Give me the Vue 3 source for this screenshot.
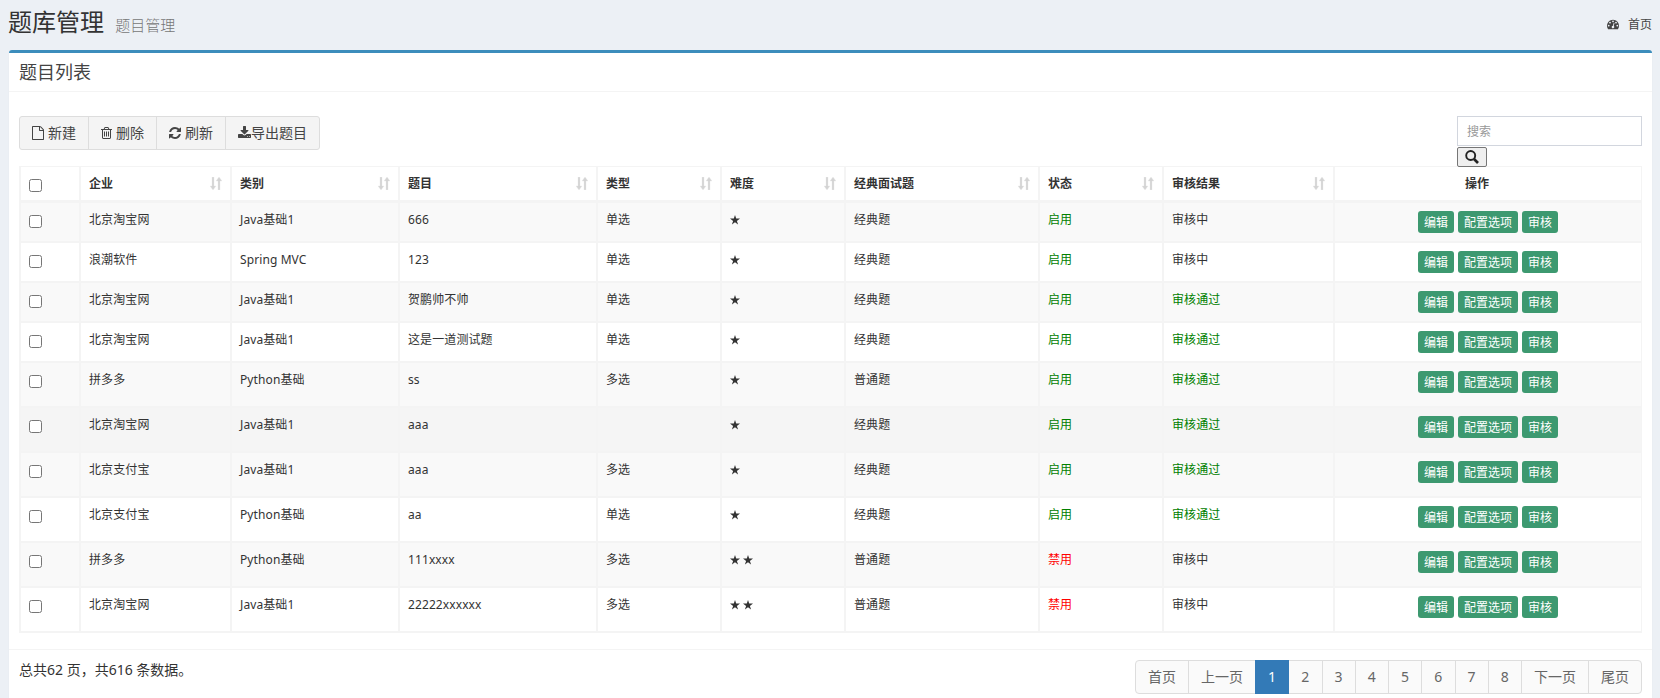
<script setup>
import { ref } from 'vue'

const keyword = ref('')
const current = ref(1)

const columns = ['企业', '类别', '题目', '类型', '难度', '经典面试题', '状态', '审核结果']
const pages = ['首页', '上一页', 1, 2, 3, 4, 5, 6, 7, 8, '下一页', '尾页']
const actions = ['编辑', '配置选项', '审核']

const rows = ref([
  { company: '北京淘宝网', category: 'Java基础1', title: '666', type: '单选', stars: 1, classic: '经典题', status: '启用', review: '审核中' },
  { company: '浪潮软件', category: 'Spring MVC', title: '123', type: '单选', stars: 1, classic: '经典题', status: '启用', review: '审核中' },
  { company: '北京淘宝网', category: 'Java基础1', title: '贺鹏帅不帅', type: '单选', stars: 1, classic: '经典题', status: '启用', review: '审核通过' },
  { company: '北京淘宝网', category: 'Java基础1', title: '这是一道测试题', type: '单选', stars: 1, classic: '经典题', status: '启用', review: '审核通过' },
  { company: '拼多多', category: 'Python基础', title: 'ss', type: '多选', stars: 1, classic: '普通题', status: '启用', review: '审核通过', tall: true },
  { company: '北京淘宝网', category: 'Java基础1', title: 'aaa', type: '', stars: 1, classic: '经典题', status: '启用', review: '审核通过', tall: true, active: true },
  { company: '北京支付宝', category: 'Java基础1', title: 'aaa', type: '多选', stars: 1, classic: '经典题', status: '启用', review: '审核通过', tall: true },
  { company: '北京支付宝', category: 'Python基础', title: 'aa', type: '单选', stars: 1, classic: '经典题', status: '启用', review: '审核通过', tall: true },
  { company: '拼多多', category: 'Python基础', title: '111xxxx', type: '多选', stars: 2, classic: '普通题', status: '禁用', review: '审核中', tall: true },
  { company: '北京淘宝网', category: 'Java基础1', title: '22222xxxxxx', type: '多选', stars: 2, classic: '普通题', status: '禁用', review: '审核中', tall: true }
])

const goto = (p) => {
  if (typeof p === 'number') current.value = p
}
</script>

<template>
  <div class="content-wrapper" lang="zh-CN">
    <section class="content-header">
      <h1>题库管理 <small>题目管理</small></h1>
      <a class="breadcrumb">
        <svg class="dashboard" viewBox="0 0 1792 1792"><path d="M384 1152q0-53-37.5-90.5t-90.5-37.5-90.5 37.5-37.5 90.5 37.5 90.5 90.5 37.5 90.5-37.5 37.5-90.5zm192-448q0-53-37.5-90.5t-90.5-37.5-90.5 37.5-37.5 90.5 37.5 90.5 90.5 37.5 90.5-37.5 37.5-90.5zm428 481l101-382q6-26-7.5-48.5t-38.5-29.5-48 6.5-30 39.5l-101 382q-60 5-107 43.5t-63 98.5q-20 77 20 146t117 89 146-20 89-117q16-60-6-117t-72-91zm660-33q0-53-37.5-90.5t-90.5-37.5-90.5 37.5-37.5 90.5 37.5 90.5 90.5 37.5 90.5-37.5 37.5-90.5zm-640-640q0-53-37.5-90.5t-90.5-37.5-90.5 37.5-37.5 90.5 37.5 90.5 90.5 37.5 90.5-37.5 37.5-90.5zm448 192q0-53-37.5-90.5t-90.5-37.5-90.5 37.5-37.5 90.5 37.5 90.5 90.5 37.5 90.5-37.5 37.5-90.5zm320 448q0 261-141 483-19 29-54 29h-1402q-35 0-54-29-141-221-141-483 0-182 71-348t191-286 286-191 348-71 348 71 286 191 191 286 71 348z" /></svg>
        首页
      </a>
    </section>

    <section class="box">
      <div class="box-header">
        <h3>题目列表</h3>
      </div>

      <div class="box-body">
        <div class="tools">
          <div class="btn-group">
            <button class="btn new">
              <svg class="file" viewBox="0 0 1536 1792"><path d="M1468 380q28 28 48 76t20 88v1152q0 40-28 68t-68 28h-1344q-40 0-68-28t-28-68v-1600q0-40 28-68t68-28h896q40 0 88 20t76 48zm-444-244v376h376q-10-29-22-41l-313-313q-12-12-41-22zm384 1528v-1024h-416q-40 0-68-28t-28-68v-416h-768v1536h1280z" /></svg>新建
            </button>
            <button class="btn del">
              <svg class="trash" viewBox="192 0 1408 1792"><path d="M704 736v576q0 14-9 23t-23 9h-64q-14 0-23-9t-9-23v-576q0-14 9-23t23-9h64q14 0 23 9t9 23zm256 0v576q0 14-9 23t-23 9h-64q-14 0-23-9t-9-23v-576q0-14 9-23t23-9h64q14 0 23 9t9 23zm256 0v576q0 14-9 23t-23 9h-64q-14 0-23-9t-9-23v-576q0-14 9-23t23-9h64q14 0 23 9t9 23zm128 724v-948h-896v948q0 22 7 40.5t14.5 27 10.5 8.5h832q3 0 10.5-8.5t14.5-27 7-40.5zm-672-1076h448l-48-117q-7-9-17-11h-317q-10 2-17 11zm928 32v64q0 14-9 23t-23 9h-96v948q0 83-47 143.5t-113 60.5h-832q-66 0-113-58.5t-47-141.5v-952h-96q-14 0-23-9t-9-23v-64q0-14 9-23t23-9h309l70-167q15-37 54-63t79-26h320q40 0 79 26t54 63l70 167h309q14 0 23 9t9 23z" /></svg>删除
            </button>
            <button class="btn reload">
              <svg class="refresh" viewBox="128 0 1536 1792"><path d="M1639 1056q0 5-1 7-64 268-268 434.5t-478 166.5q-146 0-282.5-55t-243.5-157l-129 129q-19 19-45 19t-45-19-19-45v-448q0-26 19-45t45-19h448q26 0 45 19t19 45-19 45l-137 137q71 66 161 102t187 36q134 0 250-65t186-179q11-17 53-117 8-23 30-23h192q13 0 22.5 9.5t9.5 22.5zm25-800v448q0 26-19 45t-45 19h-448q-26 0-45-19t-19-45 19-45l138-138q-148-137-349-137-134 0-250 65t-186 179q-11 17-53 117-8 23-30 23h-199q-13 0-22.5-9.5t-9.5-22.5v-7q65-268 270-434.5t480-166.5q146 0 284 55.5t245 156.5l130-129q19-19 45-19t45 19 19 45z" /></svg>刷新
            </button>
            <button class="btn export">
              <svg class="download" viewBox="64 0 1664 1792"><path d="M1344 1344q0-26-19-45t-45-19-45 19-19 45 19 45 45 19 45-19 19-45zm256 0q0-26-19-45t-45-19-45 19-19 45 19 45 45 19 45-19 19-45zm128-224v320q0 40-28 68t-68 28h-1472q-40 0-68-28t-28-68v-320q0-40 28-68t68-28h465l135 136q58 56 136 56t136-56l136-136h464q40 0 68 28t28 68zm-325-569q17 41-14 70l-448 448q-18 19-45 19t-45-19l-448-448q-31-29-14-70 17-39 59-39h256v-448q0-26 19-45t45-19h256q26 0 45 19t19 45v448h256q42 0 59 39z" /></svg>导出题目
            </button>
          </div>

          <div class="search">
            <input v-model="keyword" type="text" placeholder="搜索">
            <button>
              <svg viewBox="0 0 14 14"><circle cx="5.7" cy="5.5" r="4.5" /><path d="M9 9l4 4" /></svg>
            </button>
          </div>
        </div>

        <table>
          <colgroup>
            <col class="w-check">
            <col class="w-company">
            <col class="w-category">
            <col class="w-title">
            <col class="w-short">
            <col class="w-short">
            <col class="w-classic">
            <col class="w-short">
            <col class="w-review">
            <col>
          </colgroup>
          <thead>
            <tr>
              <th><input class="check" type="checkbox"></th>
              <th v-for="c in columns" :key="c">
                <div class="sortable">
                  {{ c }}
                  <svg viewBox="0 0 12 13"><path d="M2 0h2v9h2l-3 4-3-4h2zM8 13h2V4h2L9 0 6 4h2z" /></svg>
                </div>
              </th>
              <th class="center">操作</th>
            </tr>
          </thead>
          <tbody>
            <tr v-for="(row, i) in rows" :key="i" :class="{ tall: row.tall, active: row.active }">
              <td><input class="check" type="checkbox"></td>
              <td>{{ row.company }}</td>
              <td>{{ row.category }}</td>
              <td>{{ row.title }}</td>
              <td>{{ row.type }}</td>
              <td>
                <div class="stars">
                  <svg v-for="n in row.stars" :key="n" viewBox="0 0 10 10"><path d="M5 0l1.2 3.6H10L6.9 5.9 8.1 9.6 5 7.3 1.9 9.6l1.2-3.7L0 3.6h3.8z" /></svg>
                </div>
              </td>
              <td>{{ row.classic }}</td>
              <td :class="row.status === '启用' ? 'green' : 'red'">{{ row.status }}</td>
              <td :class="{ green: row.review === '审核通过' }">{{ row.review }}</td>
              <td>
                <div class="actions">
                  <button v-for="a in actions" :key="a">{{ a }}</button>
                </div>
              </td>
            </tr>
          </tbody>
        </table>
      </div>

      <div class="box-footer">
        <div class="total">总共62 页，共616 条数据。</div>
        <ul class="pagination">
          <li
            v-for="p in pages"
            :key="p"
            :class="{ num: typeof p === 'number', current: p === current }"
            @click="goto(p)"
          >{{ p }}</li>
        </ul>
      </div>
    </section>
  </div>
</template>

<style>
body {
  background: #ecf0f5;
  overflow: hidden;
}
</style>

<style scoped>
.content-wrapper {
  height: 698px;
  overflow: hidden;
  padding: 0 8px 0 9px;
  box-sizing: border-box;
  font-family: "Noto Sans", "Noto Sans CJK SC", sans-serif;
  font-size: 14px;
  color: #333;
}

button,
input {
  font-family: inherit;
}

svg {
  fill: currentColor;
  flex: none;
}

.content-header {
  height: 50px;
  display: flex;
  justify-content: space-between;
}

.content-header h1 {
  margin: 0 0 0 -1px;
  padding-top: 9px;
  font-size: 24px;
  line-height: 26px;
  font-weight: 400;
}

.content-header small {
  font-size: 15px;
  font-weight: 300;
  color: #777;
  margin-left: 5px;
}

.breadcrumb {
  display: flex;
  align-items: center;
  gap: 9px;
  height: 18px;
  margin-top: 15px;
  font-size: 12px;
  color: #444;
}

.dashboard {
  width: 12px;
  height: 12px;
}

.box {
  background: #fff;
  border-top: 3px solid #3c8dbc;
  border-radius: 3px;
  box-shadow: 0 1px 1px rgba(0, 0, 0, 0.1);
  height: 660px;
}

.box-header {
  height: 38px;
  border-bottom: 1px solid #f4f4f4;
  padding-left: 10px;
}

.box-header h3 {
  margin: 0;
  font-size: 18px;
  font-weight: 400;
  line-height: 38px;
  color: #444;
}

.box-body {
  padding: 24px 10px 16px;
}

.tools {
  display: flex;
  justify-content: space-between;
  height: 50px;
}

.btn-group {
  display: flex;
  height: 34px;
}

.btn {
  display: flex;
  align-items: center;
  box-sizing: border-box;
  height: 34px;
  padding: 0 0 0 12px;
  border: 1px solid #ddd;
  margin-left: -1px;
  background: #f4f4f4;
  color: #444;
  font-size: 14px;
  line-height: 20px;
  white-space: nowrap;
}

.btn:first-child {
  margin-left: 0;
  border-radius: 3px 0 0 3px;
}

.btn:last-child {
  border-radius: 0 3px 3px 0;
}

.new {
  width: 70px;
}

.del {
  width: 69px;
}

.reload {
  width: 70px;
}

.export {
  width: 95px;
}

.btn svg {
  height: 14px;
  margin-right: 4px;
}

.file {
  width: 12px;
}

.trash {
  width: 11px;
}

.refresh {
  width: 12px;
}

.btn .download {
  width: 13px;
  margin-right: 0;
}

.search {
  width: 185px;
  height: 51px;
  position: relative;
}

.search input {
  display: block;
  box-sizing: border-box;
  width: 185px;
  height: 30px;
  padding: 5px 9px;
  border: 1px solid #d2d6de;
  font-size: 12px;
}

.search input::placeholder {
  color: #999;
}

.search button {
  display: flex;
  align-items: center;
  justify-content: center;
  box-sizing: border-box;
  width: 30px;
  height: 20px;
  margin-top: 1px;
  padding: 0;
  border: 1px solid #767676;
  border-radius: 2px;
  background: #efefef;
  color: #222;
}

.search svg {
  width: 14px;
  height: 14px;
  fill: none;
  stroke: currentColor;
  stroke-width: 1.9;
}

.search path {
  stroke-width: 2.6;
}

table {
  width: 100%;
  table-layout: fixed;
  border-collapse: separate;
  border-spacing: 0;
  border: solid #f4f4f4;
  border-width: 1px 0 0 2px;
  font-size: 12px;
}

.w-check {
  width: 60px;
}

.w-company {
  width: 151px;
}

.w-category {
  width: 168px;
}

.w-title {
  width: 198px;
}

.w-short {
  width: 124px;
}

.w-classic {
  width: 194px;
}

.w-review {
  width: 171px;
}

th,
td {
  box-sizing: border-box;
  padding: 8px 8px 0;
  border: solid #f4f4f4;
  border-width: 0 2px 2px 0;
  text-align: left;
  vertical-align: top;
  line-height: 17px;
}

th {
  height: 36px;
  border-bottom-width: 3px;
}

td {
  height: 40px;
  letter-spacing: 0.1px;
}

.tall td {
  height: 45px;
}

th:last-child,
td:last-child {
  border-right-width: 1px;
}

tbody tr:nth-child(odd) {
  background: #f9f9f9;
}

tbody tr.active {
  background: #f5f5f5;
}

.check {
  display: block;
  width: 13px;
  height: 13px;
  margin: 4px 0 0;
}

.sortable {
  display: flex;
  justify-content: space-between;
}

.sortable svg {
  width: 12px;
  height: 13px;
  margin-top: 2px;
  fill: #d3d3d3;
  stroke: #ececec;
  stroke-width: 0.4;
}

th.center {
  padding-right: 30px;
  text-align: center;
}

.green {
  color: #008000;
}

.red {
  color: #f00;
}

.stars {
  display: flex;
  gap: 3px;
  padding-top: 4px;
}

.stars svg {
  width: 10px;
  height: 10px;
}

.actions {
  display: flex;
  justify-content: center;
  gap: 4px;
}

.actions button {
  height: 22px;
  padding: 1px 6px 0;
  border: 0;
  border-radius: 3px;
  background: #3d9970;
  color: #fff;
  font-size: 12px;
  line-height: 21px;
}

.box-footer {
  display: flex;
  justify-content: space-between;
  padding: 10px;
  border-top: 1px solid #f4f4f4;
}

.total {
  line-height: 20px;
}

.pagination {
  display: flex;
  margin: 0;
  padding: 0;
  list-style: none;
}

.pagination li {
  box-sizing: border-box;
  height: 34px;
  padding: 0 12px;
  margin-left: -1px;
  border: 1px solid #ddd;
  background: #fafafa;
  color: #666;
  line-height: 32px;
  text-align: center;
}

.pagination li.num {
  width: 34.25px;
}

.pagination li:first-child {
  margin-left: 0;
  border-radius: 4px 0 0 4px;
}

.pagination li:last-child {
  border-radius: 0 4px 4px 0;
}

.pagination li.current {
  position: relative;
  background: #337ab7;
  border-color: #337ab7;
  color: #fff;
}
</style>
